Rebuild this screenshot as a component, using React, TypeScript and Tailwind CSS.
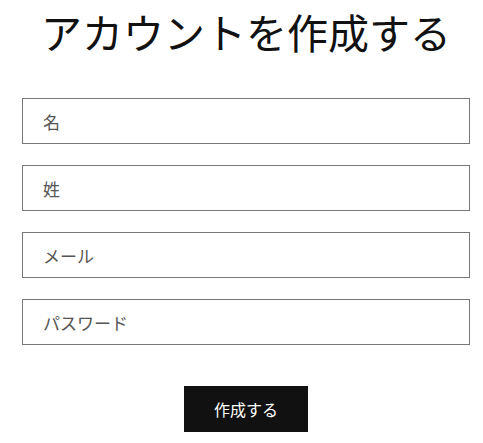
const fields = ['名', '姓', 'メール', 'パスワード'];

export default function App() {
  return (
    <div className="min-h-[443px] bg-white font-['Noto_Sans_CJK_JP','Noto_Sans',sans-serif]">
      <div className="ml-[22px] flex w-[448px] flex-col">
        <h1 className="mt-[7px] text-center text-[41px] leading-[48px] font-normal text-[#111]">
          アカウントを作成する
        </h1>
        <form className="mt-[43px] flex flex-col gap-[21px]" onSubmit={(e) => e.preventDefault()}>
          {fields.map((label) => (
            <input
              key={label}
              type={label === 'パスワード' ? 'password' : 'text'}
              placeholder={label}
              className="h-[46px] w-full border border-[#777] bg-white px-[20px] text-[17px] text-[#333] outline-none placeholder:text-[#555]"
            />
          ))}
          <div className="mt-[20px] flex justify-center">
            <button
              type="submit"
              className="h-[46px] w-[124px] bg-[#111] text-[16px] text-white"
            >
              作成する
            </button>
          </div>
        </form>
      </div>
    </div>
  );
}
